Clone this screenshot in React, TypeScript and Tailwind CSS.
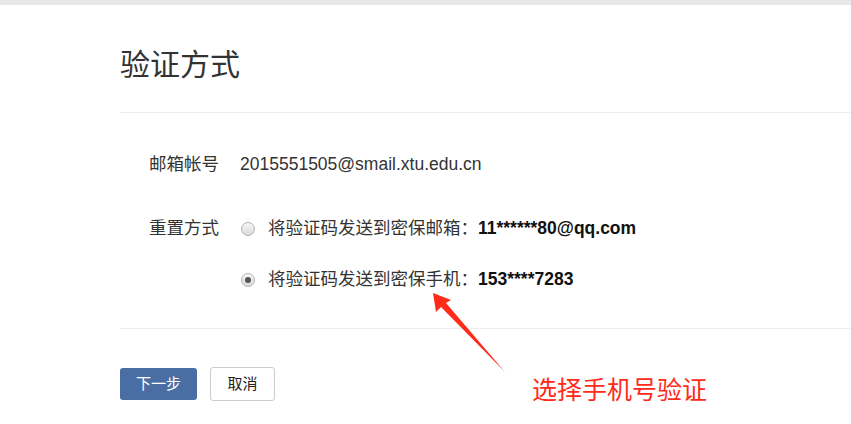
import { useState } from "react";

const FONT = { fontFamily: '"Liberation Sans", Arial, "Noto Sans CJK SC", sans-serif' };

function Radio({ checked }: { checked: boolean }) {
  return (
    <span className="ml-[1px] mt-[1px] flex h-[14px] w-[14px] shrink-0 items-center justify-center rounded-full border border-[#b3b3b3] bg-gradient-to-b from-[#f7f7f7] to-[#dadada]">
      {checked && <span className="h-[6px] w-[6px] rounded-full bg-[#555]" />}
    </span>
  );
}

export default function App() {
  const [method, setMethod] = useState<"mail" | "phone">("phone");

  return (
    <div className="relative min-h-screen overflow-hidden bg-white text-[#333]" style={FONT}>
      {/* top strip */}
      <div className="h-[5px] bg-[#e8e8e8]" />

      <div className="pl-[120px]">
        <h1 className="pt-[40px] text-[30px] leading-[40px] font-normal text-[#333]">验证方式</h1>
        <div className="mt-[27px] h-px bg-[#eeeeee]" />

        <div className="pl-[29px]">
          {/* account */}
          <div className="mt-[39px] flex h-[24px] items-center text-[17.5px]">
            <span className="w-[91px] shrink-0">邮箱帐号</span>
            <span>2015551505@smail.xtu.edu.cn</span>
          </div>

          {/* reset method */}
          <div className="mt-[40px] flex text-[17.5px]">
            <span className="flex h-[24px] w-[91px] shrink-0 items-center">重置方式</span>
            <div className="flex flex-col gap-[27px]">
              <label className="flex h-[24px] cursor-pointer items-center gap-[13px]" onClick={() => setMethod("mail")}>
                <Radio checked={method === "mail"} />
                <span>
                  将验证码发送到密保邮箱：<b className="font-bold text-[#111]">11******80@qq.com</b>
                </span>
              </label>
              <label className="flex h-[24px] cursor-pointer items-center gap-[13px]" onClick={() => setMethod("phone")}>
                <Radio checked={method === "phone"} />
                <span>
                  将验证码发送到密保手机：<b className="font-bold text-[#111]">153****7283</b>
                </span>
              </label>
            </div>
          </div>
        </div>

        <div className="mt-[37px] h-px bg-[#eeeeee]" />

        {/* actions */}
        <div className="mt-[38px] flex h-[34px] items-center gap-[13px]">
          <button className="h-[32px] w-[77px] rounded-[3px] bg-[#4a6ea4] text-[15px] text-white">下一步</button>
          <button className="h-[34px] w-[65px] rounded-[3px] border border-[#cccccc] bg-white text-[15px] text-[#222]">取消</button>
        </div>
      </div>

      {/* annotation */}
      <svg className="pointer-events-none absolute left-0 top-0" width="851" height="424">
        <polygon points="433,293 451,300 446,303 505,372 441,307 436,312" fill="#ff2a1a" />
      </svg>
      <span
        className="absolute left-[532px] top-[370px] text-[25px] leading-[36px] text-[#ff2a1a]"
        style={{ fontFamily: '"Noto Sans CJK SC", sans-serif' }}
      >
        选择手机号验证
      </span>
    </div>
  );
}
